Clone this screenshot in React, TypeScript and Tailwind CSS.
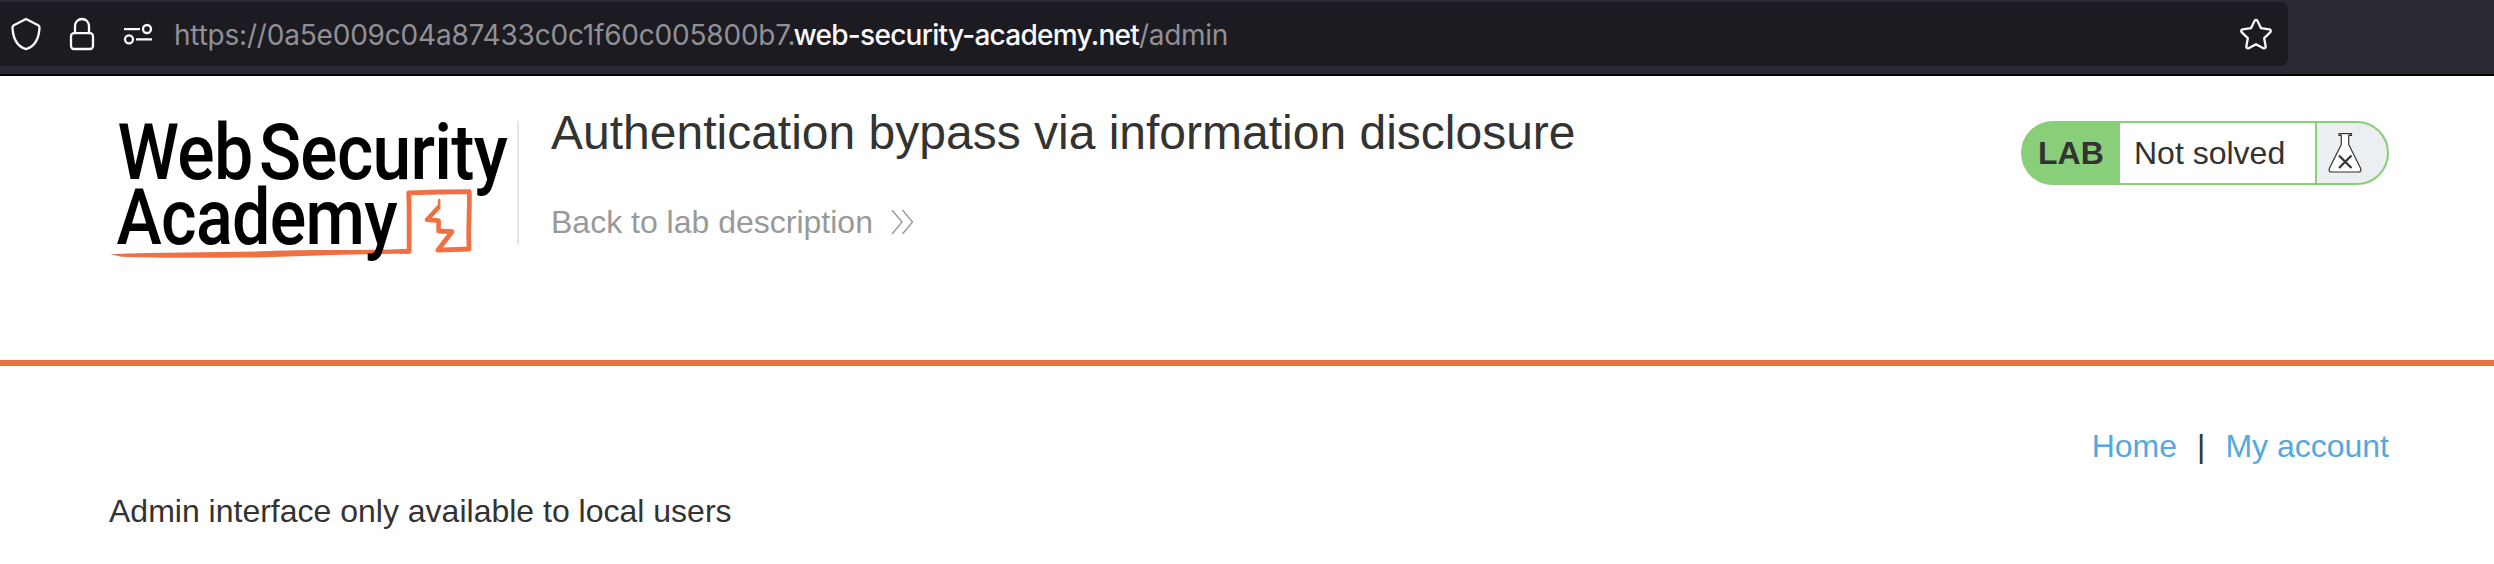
function Toolbar() {
  return (
    <div className="h-[76px] border-b-2 border-black bg-[#2b2a33] pt-[2px]">
      <div className="flex h-16 w-[2288px] items-center rounded-r-lg bg-[#1c1b22]">
        <svg className="h-16 w-[174px] shrink-0" viewBox="0 2 174 64" fill="none" stroke="#fbfbfe" strokeWidth="2.3" strokeLinecap="round" strokeLinejoin="round">
          <path d="M26 19 38.200 25.200Q39.600 26 39.500 27.600C39 38 35.500 45.500 27.400 48.600Q26 49.400 24.600 48.600C16.500 45.500 13 38 12.500 27.600Q12.400 26 13.800 25.200Z" />
          <rect x="71" y="33.2" width="22" height="15.800" rx="3" />
          <path d="M75 33V26a7 7 0 0 1 14 0v7" />
          <path d="M124 29.200h16M136 39.400h16" strokeLinecap="butt" />
          <circle cx="147" cy="29" r="4" />
          <circle cx="129" cy="39.300" r="4" />
        </svg>
        <p className="flex flex-1 items-baseline whitespace-pre pt-[2px] font-[Inter,sans-serif] text-[28px] leading-8 text-[#919095]">
          <span className="w-[619.500px] tracking-[-0.200px]">https://0a5e009c04a87433c0c1f60c005800b7.</span>
          <span className="w-[345.500px] font-medium tracking-[-0.720px] text-[#fbfbfe]">web-security-academy.net</span>
          <span className="tracking-[-0.300px]">/admin</span>
        </p>
        <svg className="mr-[14px] h-9 w-9" viewBox="2238 16 36 36" fill="none" stroke="#fbfbfe" strokeWidth="2.3" strokeLinejoin="round">
          <path d="M2254.600 20.800q1.400-1.800 2.800 0l3.600 7.400 8.400 1.200q2.200.8 1 2.800l-6.200 6 1.500 8.400q-.2 2.300-2.400 1.600l-7.300-4-7.300 4q-2.200.7-2.400-1.600l1.500-8.400-6.200-6q-1.200-2 1-2.800l8.400-1.200Z" />
        </svg>
      </div>
    </div>
  );
}

function Logo() {
  return (
    <svg className="h-[160px] w-[408px] shrink-0 overflow-visible" viewBox="109 110 408 160">
      <path d="M110 254.200C160 252.300 210 252.300 255 251.500C310 248.800 360 251 409 248.700V253.800C350 253.800 310 256.200 255 257.500C210 257.800 160 258.200 122 256.800Z" fill="#ef7042" />
      <g fill="none" stroke="#ef7042" strokeLinejoin="round">
        <path d="M400 251.400H409.200C409 230 409.600 215 408.700 192.900L440 192 469.300 191.700C469.800 215 467.800 230 469.200 249L437.800 250.200 452 231.700 438.500 230.800" strokeWidth="4.8" />
        <path d="M439.300 206.500 427 219.800 438.600 220.600V231L450 231.600" strokeWidth="4.600" />
        <path d="M439.200 200 439 207" strokeWidth="2.600" strokeLinecap="round" />
      </g>
      <g fontFamily="Roboto, sans-serif" fontSize="77" fontWeight="500" letterSpacing="-0.800" fill="#000">
        <text x="117.500" y="178.700" textLength="135" lengthAdjust="spacingAndGlyphs">Web</text>
        <text x="259" y="178.700" textLength="248" lengthAdjust="spacingAndGlyphs">Security</text>
        <text x="116.500" y="243.600" textLength="280.500" lengthAdjust="spacingAndGlyphs">Academy</text>
      </g>
    </svg>
  );
}

function LabStatus() {
  return (
    <div className="mt-[45px] flex h-16 w-[368px] overflow-hidden rounded-[32px] border-2 border-[#89cf7a] bg-[#89cf7a] text-[32px] leading-[60px]">
      <div className="w-[97px] pl-[15px] font-bold">LAB</div>
      <div className="w-[195px] bg-white pl-[14px]">Not solved</div>
      <div className="ml-[2px] flex-1 bg-[#ebeff2]">
        <svg className="ml-[10px] mt-[8px] h-11 w-9" viewBox="2327 131 36 44" fill="white" stroke="#333332" strokeLinejoin="round">
          <path d="M2339 133.600h12.500v1.800h-2.800v9l12 24q.9 3.600-2.200 3.600h-27q-3 0-2.200-3.600l12-24v-9h-2.300Z" strokeWidth="1.200" />
          <path d="m2339 155.500 12.500 12.500m0-12.500-12.500 12.500" strokeWidth="2.200" />
        </svg>
      </div>
    </div>
  );
}

export default function App() {
  return (
    <div className="h-[564px] overflow-hidden bg-white font-['Liberation_Sans',Arial,sans-serif] text-[#333332]">
      <Toolbar />
      <header className="flex h-[290px] border-b-[6px] border-[#eb7242] pl-[109px] pr-[105px]">
        <div className="pt-[34px]">
          <Logo />
        </div>
        <div className="mt-[45px] h-[124px] w-[2px] bg-[#e5e5e5]" />
        <div className="flex-1 pl-8 pt-[29px]">
          <h2 className="text-5xl leading-[56px]">Authentication bypass via information disclosure</h2>
          <a className="mt-[43px] flex items-center text-[32px] leading-[36px] text-[#999]">
            Back to lab description
            <svg className="ml-[17px] h-7 w-6" viewBox="0 0 24 28" fill="none" stroke="#999" strokeWidth="1.400">
              <path d="m2 2 10 12L2 26M12.500 2l10 12-10 12" />
            </svg>
          </a>
        </div>
        <LabStatus />
      </header>
      <main className="px-[109px] text-[32px] leading-[36px]">
        <nav className="-mr-1 flex justify-end pt-[62px]">
          <a className="text-[#53a8df]">Home</a>
          <span className="mx-5">|</span>
          <a className="text-[#53a8df]">My account</a>
        </nav>
        <p className="mt-[29px]">Admin interface only available to local users</p>
      </main>
    </div>
  );
}
